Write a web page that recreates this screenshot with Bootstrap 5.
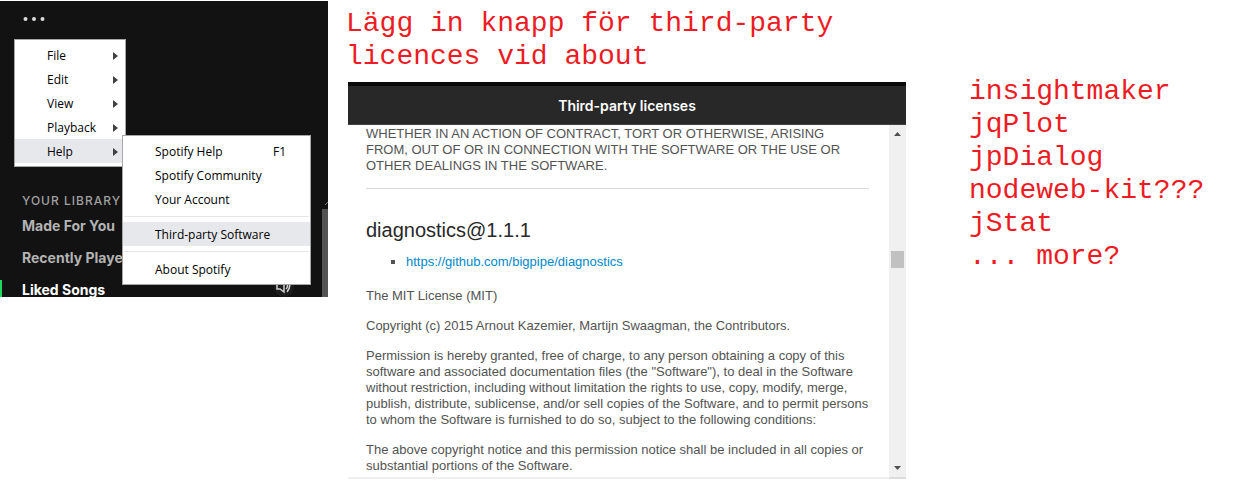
<!DOCTYPE html>
<html lang="sv">
<head>
<meta charset="utf-8">
<meta name="viewport" content="width=device-width, initial-scale=1">
<title>Third-party licences</title>
<link href="https://cdn.jsdelivr.net/npm/bootstrap@5.3.0/dist/css/bootstrap.min.css" rel="stylesheet">
<style>
body { font-family: "Liberation Sans", Arial, sans-serif; font-size: 13px; line-height: 16px; color: #535353; background: #fff; }
.board { display: grid; grid-template-columns: 328fr 20px 558fr 331fr; align-items: start; }
.licence-col { grid-column: 3; }

/* Notes */
.note { font-family: "Liberation Mono", "Courier New", monospace; font-size: 28px; line-height: 33px; color: #ed1c24; }
.note-head { padding-top: 7px; margin: 0 0 9px -2px; }
.note-list { padding: 75px 0 0 63px; }

/* App window */
.app { margin-top: 1px; background: #121212; font-family: Inter, sans-serif; color: #b3b3b3; }
.app-top { padding: 10px 22px 0; margin-bottom: 166px; }
.dots { display: block; width: 24px; height: 16px; color: #dcdcdc; }
.menu-pane.dropdown-menu { --bs-dropdown-min-width: 0; --bs-dropdown-font-size: 12px; --bs-dropdown-link-color: #000; --bs-dropdown-link-hover-color: #000; --bs-dropdown-link-hover-bg: #e7e8ec; --bs-dropdown-item-padding-x: 32px; font-family: "Open Sans", sans-serif; padding: 3px 0; border: 1px solid #a6a6a6; border-radius: 0; line-height: 16px; }
.menu-pane .dropdown-item { height: 24px; padding-top: 5px; padding-bottom: 3px; }
.menu-pane .picked { background: #e7e8ec; }
.menu-pane .dropdown-divider { margin: 5px 1px; border-color: #e5e5e5; opacity: 1; }
.menu-main { top: 38px; left: 14px; width: 112px; }
.menu-main > li > .dropdown-item { padding-right: 7px; }
.menu-sub { top: -4px; left: 107px; width: 189px; }
.menu-sub .dropdown-item { padding-right: 24px; }
.lib-title { font-size: 12px; line-height: 16px; font-weight: 500; letter-spacing: 1px; margin: 0 0 7px 22px; color: #a0a0a0; }
.lib-list { gap: 15px; font-size: 14px; line-height: 19px; font-weight: 700; }
.lib-list li { border-left: 2px solid transparent; padding-left: 20px; height: 17px; }
.lib-list a { color: inherit; text-decoration: none; }
.lib-list .current { border-color: #1ed760; color: #fff; }
.speaker { margin-right: 34px; background: #1c1c1c; border-radius: 0 0 12px 12px; }
.app-scroll { right: 0; bottom: 0; top: 198px; width: 6px; }
.app-thumb { background: #535353; }

/* Licence dialog */
.dialog-title { border-top: 4px solid #0a0a0a; border-bottom: 1px solid #404040; background: #282828; color: #fff; font-family: Inter, sans-serif; font-size: 14px; line-height: 36px; padding-top: 2px; font-weight: 600; margin: 0; }
.dialog-text { padding: 1px 20px 3px 18px; border-bottom: 2px solid #f0f0f0; }
.dialog-text p { margin: 0 0 14px; }
.dialog-text p:last-child { margin: 0; }
.dialog-text hr { margin: 14px 0 28px; border-color: #d9d9d9; opacity: 1; }
.dialog-text h2 { font-size: 20px; line-height: 26px; font-weight: 400; color: #282828; margin: 0 0 11px; }
.dialog-text ul { list-style: square; padding-left: 40px; margin: 0 0 18px; }
.dialog-text a { color: #0088cc; text-decoration: none; }
.bar { width: 17px; background: #f0f0f0; border-bottom: 2px solid #dcdcdc; color: #505050; }
.bar-thumb { width: 13px; height: 17px; background: #c1c1c1; margin-top: 109px; }
</style>
</head>
<body>
<main class="board">
  <section class="app position-relative overflow-hidden">
    <div class="app-top">
      <button class="dots btn p-0 border-0" type="button" aria-label="Menu">
        <svg class="d-block" width="24" height="16" fill="currentColor"><circle cx="3.5" cy="8" r="2"/><circle cx="12" cy="8" r="2"/><circle cx="20.500" cy="8" r="2"/></svg>
      </button>
      <ul class="menu-pane menu-main dropdown-menu show">
        <li><button class="dropdown-item d-flex align-items-center justify-content-between" type="button">File<svg width="5" height="8" fill="#404040"><path d="M0 0L5 4L0 8Z"/></svg></button></li>
        <li><button class="dropdown-item d-flex align-items-center justify-content-between" type="button">Edit<svg width="5" height="8" fill="#404040"><path d="M0 0L5 4L0 8Z"/></svg></button></li>
        <li><button class="dropdown-item d-flex align-items-center justify-content-between" type="button">View<svg width="5" height="8" fill="#404040"><path d="M0 0L5 4L0 8Z"/></svg></button></li>
        <li><button class="dropdown-item d-flex align-items-center justify-content-between" type="button">Playback<svg width="5" height="8" fill="#404040"><path d="M0 0L5 4L0 8Z"/></svg></button></li>
        <li class="position-relative"><button class="dropdown-item picked d-flex align-items-center justify-content-between" type="button">Help<svg width="5" height="8" fill="#404040"><path d="M0 0L5 4L0 8Z"/></svg></button>
          <ul class="menu-pane menu-sub dropdown-menu show">
            <li><button class="dropdown-item d-flex justify-content-between" type="button"><span>Spotify Help</span><span>F1</span></button></li>
            <li><button class="dropdown-item" type="button">Spotify Community</button></li>
            <li><button class="dropdown-item" type="button">Your Account</button></li>
            <li><hr class="dropdown-divider"></li>
            <li><button class="dropdown-item picked" type="button">Third-party Software</button></li>
            <li><hr class="dropdown-divider"></li>
            <li><button class="dropdown-item" type="button">About Spotify</button></li>
          </ul>
        </li>
      </ul>
    </div>
    <h2 class="lib-title">YOUR LIBRARY</h2>
    <ul class="lib-list list-unstyled d-flex flex-column mb-0">
      <li><a href="#">Made For You</a></li>
      <li><a href="#">Recently Played</a></li>
      <li class="current d-flex justify-content-between"><a href="#">Liked Songs</a>
        <svg class="speaker" width="20" height="17" fill="none" stroke="#cfcfcf" stroke-width="1.500"><path d="M3 1v8h3l4 3V0M12 3q3 3 0 6M14 0q4 6-1 12"/></svg>
      </li>
    </ul>
    <div class="app-scroll position-absolute d-flex flex-column">
      <svg width="6" height="10" fill="none" stroke="#777"><path d="M3 6L6 3"/></svg>
      <div class="app-thumb flex-grow-1"></div>
    </div>
  </section>

  <section class="licence-col">
    <p class="note note-head">Lägg in knapp för third-party licences vid about</p>
    <article>
      <h1 class="dialog-title text-center">Third-party licenses</h1>
      <div class="d-flex">
        <div class="dialog-text flex-grow-1">
          <p>WHETHER IN AN ACTION OF CONTRACT, TORT OR OTHERWISE, ARISING FROM, OUT OF OR IN CONNECTION WITH THE SOFTWARE OR THE USE OR OTHER DEALINGS IN THE SOFTWARE.</p>
          <hr>
          <h2>diagnostics@1.1.1</h2>
          <ul><li><a href="https://github.com/bigpipe/diagnostics">https://github.com/bigpipe/diagnostics</a></li></ul>
          <p>The MIT License (MIT)</p>
          <p>Copyright (c) 2015 Arnout Kazemier, Martijn Swaagman, the Contributors.</p>
          <p>Permission is hereby granted, free of charge, to any person obtaining a copy of this software and associated documentation files (the "Software"), to deal in the Software without restriction, including without limitation the rights to use, copy, modify, merge, publish, distribute, sublicense, and/or sell copies of the Software, and to permit persons to whom the Software is furnished to do so, subject to the following conditions:</p>
          <p>The above copyright notice and this permission notice shall be included in all copies or substantial portions of the Software.</p>
        </div>
        <div class="bar d-flex flex-column align-items-center flex-shrink-0">
          <svg class="flex-shrink-0" width="17" height="17" fill="currentColor"><path d="M5 11L8.500 7L12 11Z"/></svg>
          <div class="bar-thumb flex-shrink-0"></div>
          <svg class="mt-auto flex-shrink-0" width="17" height="17" fill="currentColor"><path d="M5 6L8.500 10L12 6Z"/></svg>
        </div>
      </div>
    </article>
  </section>

  <ul class="note note-list list-unstyled mb-0">
    <li>insightmaker</li>
    <li>jqPlot</li>
    <li>jpDialog</li>
    <li>nodeweb-kit???</li>
    <li>jStat</li>
    <li>... more?</li>
  </ul>
</main>
<script src="https://cdn.jsdelivr.net/npm/bootstrap@5.3.0/dist/js/bootstrap.bundle.min.js"></script>
</body>
</html>
